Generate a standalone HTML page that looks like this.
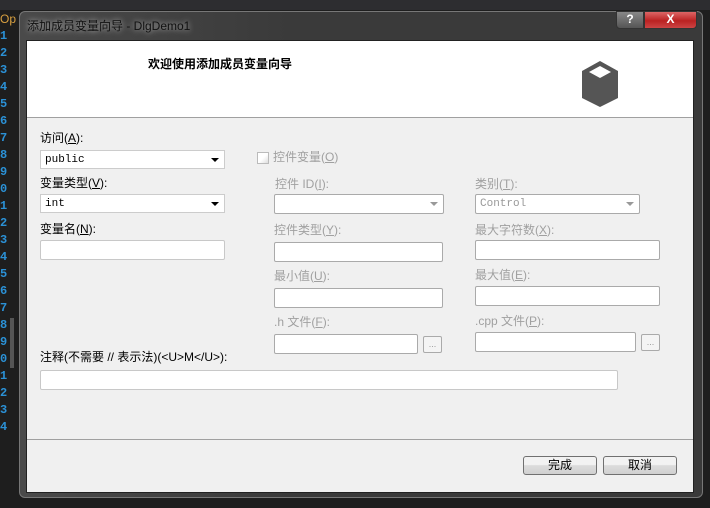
<!DOCTYPE html>
<html><head><meta charset="utf-8"><style>
*{margin:0;padding:0;box-sizing:border-box}
body{width:710px;height:508px;background:#1e1e1e;position:relative;overflow:hidden;font-family:"Liberation Sans","Noto Sans CJK SC",sans-serif;font-size:12px}
.a{position:absolute}
.ln{position:absolute;left:0;width:12px;color:#2b91d6;font:bold 12px "Liberation Mono",monospace;line-height:17px}
.lab{position:absolute;font-size:12px;color:#000;white-space:nowrap;line-height:14px}
.dis{color:#a0a0a0}
.ed{position:absolute;background:#fff;border:1px solid #c8c8c8;border-radius:2px}
.edd{position:absolute;background:#fff;border:1px solid #aaa;border-radius:2px}
.cb{position:absolute;background:#fff;border:1px solid #ccc;font:11px "Liberation Mono",monospace;padding:3px 4px}
.arr{position:absolute;right:5px;top:7px;width:0;height:0;border-left:4px solid transparent;border-right:4px solid transparent;border-top:4px solid #000}
.btn{position:absolute;border:1px solid #707070;border-radius:3px;background:linear-gradient(#f2f2f2 45%,#dcdcdc 50%,#d0d0d0);text-align:center;line-height:17px;font-size:12px}
</style></head><body>
<div class="a" style="left:0;top:0;width:710px;height:10px;background:#2d2d30"></div>
<div class="a" style="left:0;top:12px;color:#d8a040;font-size:12px">Op</div>
<div class="ln" style="top:28px">1<br>2<br>3<br>4<br>5<br>6<br>7<br>8<br>9<br>0<br>1<br>2<br>3<br>4<br>5<br>6<br>7<br>8<br>9<br>0<br>1<br>2<br>3<br>4</div>
<div class="a" style="left:10px;top:318px;width:4px;height:50px;background:#555"></div>
<div class="a" style="left:19px;top:11px;width:684px;height:487px;background:linear-gradient(90deg,#4a4a4a,#3a3a3a 40%,#3a3a3a);border:1px solid #777;border-radius:6px"></div>
<div class="a" style="left:27px;top:17px;color:#111;font-size:12px;text-shadow:0 0 6px #ccc">添加成员变量向导 - DlgDemo1</div>
<div class="a" style="left:616px;top:11px;width:28px;height:18px;background:linear-gradient(#888,#555);border:1px solid #333;border-radius:0 0 0 4px;color:#fff;text-align:center;font-weight:bold;font-size:12px">?</div>
<div class="a" style="left:644px;top:11px;width:53px;height:18px;background:linear-gradient(#d66,#b22 55%,#c44);border:1px solid #333;border-radius:0 0 4px 0;color:#fff;text-align:center;font-weight:bold;font-size:12px">X</div>
<div class="a" style="left:26px;top:40px;width:668px;height:453px;background:#f0f0f0;border:1px solid #222"></div>
<div class="a" style="left:27px;top:41px;width:666px;height:77px;background:#fff;border-bottom:1px solid #a0a0a0"></div>
<div class="lab" style="left:148px;top:57px;font-weight:bold">欢迎使用添加成员变量向导</div>
<svg class="a" style="left:580px;top:60px" width="40" height="48" viewBox="0 0 40 48"><polygon points="20,1 38,11 38,38 20,47 2,38 2,11" fill="#555"/><polygon points="20,6 31,12 20,18 9,12" fill="#fff"/></svg>
<div class="lab" style="left:40px;top:131px">访问(<u>A</u>):</div>
<div class="cb" style="left:40px;top:150px;width:185px;height:19px">public<div class="arr"></div></div>
<div class="lab" style="left:40px;top:176px">变量类型(<u>V</u>):</div>
<div class="cb" style="left:40px;top:194px;width:185px;height:19px">int<div class="arr"></div></div>
<div class="lab" style="left:40px;top:222px">变量名(<u>N</u>):</div>
<div class="ed" style="left:40px;top:240px;width:185px;height:20px"></div>
<div class="a" style="left:257px;top:152px;width:12px;height:12px;border:1px solid #bbb;background:linear-gradient(135deg,#fff 50%,#ddd)"></div>
<div class="lab dis" style="left:273px;top:150px">控件变量(<u>O</u>)</div>
<div class="lab dis" style="left:275px;top:177px">控件 ID(<u>I</u>):</div>
<div class="edd" style="left:274px;top:194px;width:170px;height:20px"><div class="arr" style="border-top-color:#999"></div></div>
<div class="lab dis" style="left:475px;top:177px">类别(<u>T</u>):</div>
<div class="edd" style="left:475px;top:194px;width:165px;height:20px;font:11px 'Liberation Mono',monospace;color:#999;padding:3px 4px">Control<div class="arr" style="border-top-color:#999"></div></div>
<div class="lab dis" style="left:274px;top:223px">控件类型(<u>Y</u>):</div>
<div class="edd" style="left:274px;top:242px;width:169px;height:20px"></div>
<div class="lab dis" style="left:475px;top:223px">最大字符数(<u>X</u>):</div>
<div class="edd" style="left:475px;top:240px;width:185px;height:20px"></div>
<div class="lab dis" style="left:274px;top:269px">最小值(<u>U</u>):</div>
<div class="edd" style="left:274px;top:288px;width:169px;height:20px"></div>
<div class="lab dis" style="left:475px;top:268px">最大值(<u>E</u>):</div>
<div class="edd" style="left:475px;top:286px;width:185px;height:20px"></div>
<div class="lab dis" style="left:274px;top:315px">.h 文件(<u>F</u>):</div>
<div class="edd" style="left:274px;top:334px;width:144px;height:20px"></div>
<div class="edd" style="left:423px;top:336px;width:19px;height:17px;background:#f4f4f4;color:#999;font-size:9px;text-align:center;line-height:14px">...</div>
<div class="lab dis" style="left:475px;top:314px">.cpp 文件(<u>P</u>):</div>
<div class="edd" style="left:475px;top:332px;width:161px;height:20px"></div>
<div class="edd" style="left:641px;top:334px;width:19px;height:17px;background:#f4f4f4;color:#999;font-size:9px;text-align:center;line-height:14px">...</div>
<div class="lab" style="left:40px;top:350px">注释(不需要 // 表示法)(&lt;U&gt;M&lt;/U&gt;):</div>
<div class="ed" style="left:40px;top:370px;width:578px;height:20px"></div>
<div class="a" style="left:27px;top:439px;width:666px;height:1px;background:#a0a0a0"></div>
<div class="btn" style="left:523px;top:456px;width:74px;height:19px">完成</div>
<div class="btn" style="left:603px;top:456px;width:74px;height:19px">取消</div>
</body></html>
